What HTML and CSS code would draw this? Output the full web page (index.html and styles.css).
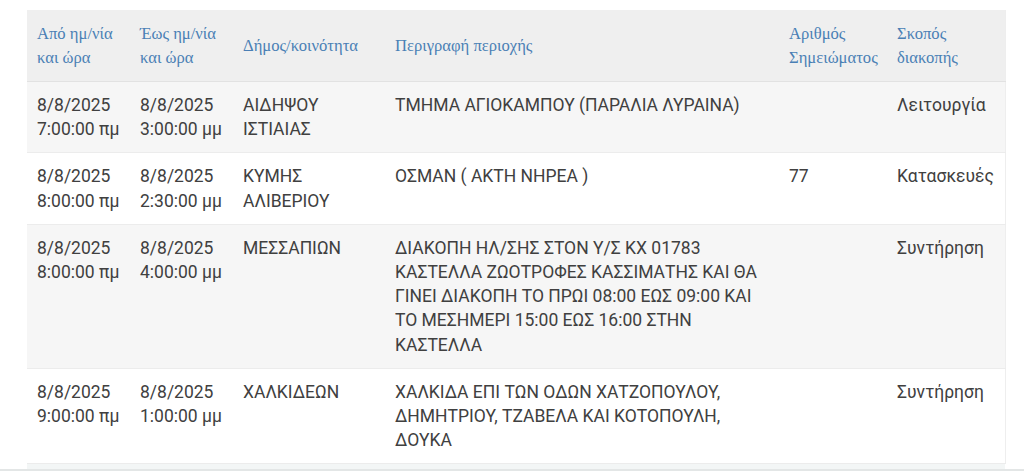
FILE: index.html
```html
<!DOCTYPE html>
<html lang="el">
<head>
<meta charset="utf-8">
<link rel="stylesheet" href="styles.css">
</head>
<body>
<div class="page">
  <table class="outages">
    <colgroup>
      <col class="c-from">
      <col class="c-to">
      <col class="c-muni">
      <col class="c-desc">
      <col class="c-note">
      <col class="c-purpose">
    </colgroup>
    <thead>
      <tr>
        <th>Από ημ/νία<br>και ώρα</th>
        <th>Έως ημ/νία<br>και ώρα</th>
        <th>Δήμος/κοινότητα</th>
        <th>Περιγραφή περιοχής</th>
        <th>Αριθμός<br>Σημειώματος</th>
        <th>Σκοπός<br>διακοπής</th>
      </tr>
    </thead>
    <tbody>
      <tr class="alt">
        <td>8/8/2025<br>7:00:00 πμ</td>
        <td>8/8/2025<br>3:00:00 μμ</td>
        <td>ΑΙΔΗΨΟΥ<br>ΙΣΤΙΑΙΑΣ</td>
        <td>ΤΜΗΜΑ ΑΓΙΟΚΑΜΠΟΥ (ΠΑΡΑΛΙΑ ΛΥΡΑΙΝΑ)</td>
        <td></td>
        <td>Λειτουργία</td>
      </tr>
      <tr>
        <td>8/8/2025<br>8:00:00 πμ</td>
        <td>8/8/2025<br>2:30:00 μμ</td>
        <td>ΚΥΜΗΣ<br>ΑΛΙΒΕΡΙΟΥ</td>
        <td>ΟΣΜΑΝ ( ΑΚΤΗ ΝΗΡΕΑ )</td>
        <td>77</td>
        <td>Κατασκευές</td>
      </tr>
      <tr class="alt">
        <td>8/8/2025<br>8:00:00 πμ</td>
        <td>8/8/2025<br>4:00:00 μμ</td>
        <td>ΜΕΣΣΑΠΙΩΝ</td>
        <td>ΔΙΑΚΟΠΗ ΗΛ/ΣΗΣ ΣΤΟΝ Υ/Σ ΚΧ 01783<br>ΚΑΣΤΕΛΛΑ ΖΩΟΤΡΟΦΕΣ ΚΑΣΣΙΜΑΤΗΣ ΚΑΙ ΘΑ<br>ΓΙΝΕΙ ΔΙΑΚΟΠΗ ΤΟ ΠΡΩΙ 08:00 ΕΩΣ 09:00 ΚΑΙ<br>ΤΟ ΜΕΣΗΜΕΡΙ 15:00 ΕΩΣ 16:00 ΣΤΗΝ<br>ΚΑΣΤΕΛΛΑ</td>
        <td></td>
        <td>Συντήρηση</td>
      </tr>
      <tr>
        <td>8/8/2025<br>9:00:00 πμ</td>
        <td>8/8/2025<br>1:00:00 μμ</td>
        <td>ΧΑΛΚΙΔΕΩΝ</td>
        <td>ΧΑΛΚΙΔΑ ΕΠΙ ΤΩΝ ΟΔΩΝ ΧΑΤΖΟΠΟΥΛΟΥ,<br>ΔΗΜΗΤΡΙΟΥ, ΤΖΑΒΕΛΑ ΚΑΙ ΚΟΤΟΠΟΥΛΗ,<br>ΔΟΥΚΑ</td>
        <td></td>
        <td>Συντήρηση</td>
      </tr>
    </tbody>
  </table>
  <div class="table-foot"></div>
</div>
<div class="page-rule"></div>
</body>
</html>
```

FILE: styles.css
```css
html, body {
  margin: 0;
  padding: 0;
  background: #ffffff;
}

.page {
  padding: 10px 0 0 27px;
  width: 978px;
}

.outages {
  width: 978px;
  border-collapse: collapse;
  table-layout: fixed;
  border-right: 1px solid #eeeeee;
}

.c-from { width: 103px; }
.c-to { width: 103px; }
.c-muni { width: 152px; }
.c-desc { width: 394px; }
.c-note { width: 108px; }
.c-purpose { width: 118px; }

.outages th {
  background: #efefef;
  color: #4a7fb5;
  font-family: "Liberation Serif", "DejaVu Serif", serif;
  font-weight: normal;
  font-size: 16.6px;
  line-height: 24px;
  text-align: left;
  vertical-align: middle;
  padding: 12px 10px 11px 10px;
  border-bottom: 1px solid #e2e2e2;
  white-space: nowrap;
}

.outages td {
  font-family: Roboto, "Noto Sans", sans-serif;
  font-size: 17.5px;
  line-height: 24.2px;
  color: #404040;
  vertical-align: top;
  padding: 11px 10px 11px 10px;
  border-bottom: 1px solid #ececec;
  white-space: nowrap;
}

.outages tbody tr {
  background: #ffffff;
}

.outages tbody tr.alt {
  background: #f6f6f6;
}

.table-foot {
  height: 5px;
  background: #f3f6f6;
}

.page-rule {
  height: 2px;
  background: #e3e6e6;
}
```
